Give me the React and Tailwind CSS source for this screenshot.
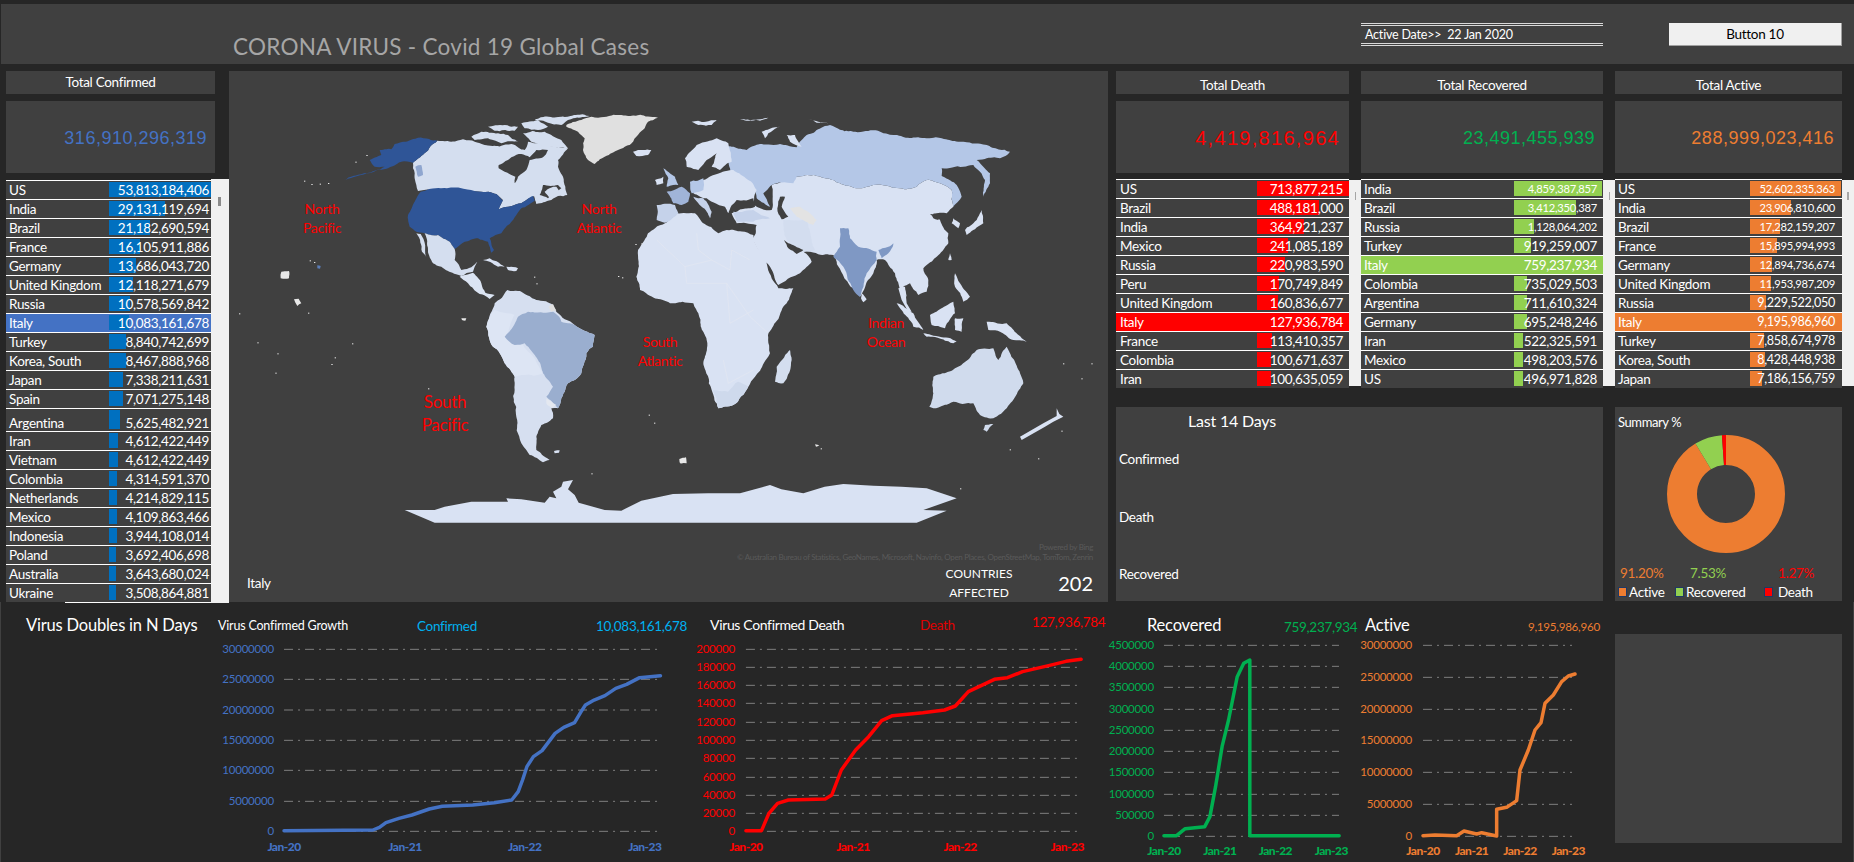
import React from 'react';

const CONFIRMED = [
  ['US', '53,813,184,406', 102], ['India', '29,131,119,694', 56], ['Brazil', '21,182,690,594', 41],
  ['France', '16,105,911,886', 31], ['Germany', '13,686,043,720', 27], ['United Kingdom', '12,118,271,679', 24],
  ['Russia', '10,578,569,842', 21], ['Italy', '10,083,161,678', 20], ['Turkey', '8,840,742,699', 17],
  ['Korea, South', '8,467,888,968', 17], ['Japan', '7,338,211,631', 14], ['Spain', '7,071,275,148', 14],
  ['Argentina', '5,625,482,921', 11, null, true], ['Iran', '4,612,422,449', 9], ['Vietnam', '4,612,422,449', 9],
  ['Colombia', '4,314,591,370', 8], ['Netherlands', '4,214,829,115', 8], ['Mexico', '4,109,863,466', 8],
  ['Indonesia', '3,944,108,014', 8], ['Poland', '3,692,406,698', 7], ['Australia', '3,643,680,024', 7],
  ['Ukraine', '3,508,864,881', 7],
];
const DEATHS = [
  ['US', '713,877,215', 92], ['Brazil', '488,181,000', 62], ['India', '364,921,237', 47], ['Mexico', '241,085,189', 31],
  ['Russia', '220,983,590', 28], ['Peru', '170,749,849', 22], ['United Kingdom', '160,836,677', 21], ['Italy', '127,936,784', 92],
  ['France', '113,410,357', 15], ['Colombia', '100,671,637', 14], ['Iran', '100,635,059', 14],
];
const RECOVERED = [
  ['India', '4,859,387,857', 88, 's'], ['Brazil', '3,412,350,387', 62, 's'], ['Russia', '1,128,064,202', 20, 's'],
  ['Turkey', '919,259,007', 17], ['Italy', '759,237,934', 88], ['Colombia', '735,029,503', 13], ['Argentina', '711,610,324', 13],
  ['Germany', '695,248,246', 13], ['Iran', '522,325,591', 9], ['Mexico', '498,203,576', 9], ['US', '496,971,828', 9],
];
const ACTIVE = [
  ['US', '52,602,335,363', 91, 's'], ['India', '23,906,810,600', 41, 's'], ['Brazil', '17,282,159,207', 30, 's'],
  ['France', '15,895,994,993', 27, 's'], ['Germany', '12,894,736,674', 22, 's'], ['United Kingdom', '11,953,987,209', 21, 's'],
  ['Russia', '9,229,522,050', 16, 'm'], ['Italy', '9,195,986,960', 91, 'm'], ['Turkey', '7,858,674,978', 14, 'm'],
  ['Korea, South', '8,428,448,938', 15, 'm'], ['Japan', '7,186,156,759', 12, 'm'],
];

const numSize = {
  s: 'text-[11.2px] tracking-[-0.25px]',
  m: 'text-[12.6px] tracking-[-0.3px]',
};

const Row = ({ row, barLeft, barClass, hlClass, pad }) => {
  const [name, value, w, size, tall] = row;
  const selected = name === 'Italy';
  return (
    <div className={`relative flex items-center justify-between border-t border-white ${tall ? 'h-[23px] pt-[6px]' : 'h-[19px] pt-[1px]'} ${pad} ${selected ? hlClass : ''}`}>
      <div className={`absolute top-[1px] ${tall ? 'h-[19px]' : 'h-[15px]'} ${barClass}`} style={{ left: barLeft, width: w }} />
      <span className="relative">{name}</span>
      <span className={`relative ${size ? numSize[size] : ''}`}>{value}</span>
    </div>
  );
};

const Table = ({ rows, barLeft, barClass, hlClass, pad, width }) => (
  <div className={`bg-[#404040] text-white text-[13.5px] tracking-[-0.3px] ${width}`}>
    {rows.map((r) => (
      <Row key={r[0]} row={r} barLeft={barLeft} barClass={barClass} hlClass={hlClass} pad={pad} />
    ))}
  </div>
);

const Scroll = ({ lineClass }) => (
  <div className="w-[12px] h-[206px] mt-[1px] bg-[#f0f0f0] flex justify-center pt-[12px]">
    <div className={lineClass} />
  </div>
);

const StatHead = ({ title, value, color, width, extra }) => (
  <div className={width}>
    <div className="h-[23px] bg-[#404040] text-white text-[13.5px] tracking-[-0.3px] text-center pt-[4px]">{title}</div>
    <div className={`mt-[7px] h-[72px] pt-[2px] bg-[#404040] flex items-center justify-end [font-family:'Liberation_Sans',sans-serif] ${color} ${extra}`}>{value}</div>
  </div>
);

const LAND = '#d9e2f3';
const WATER = '#404040';

// small seeded wobble so the traced coastlines don't look like straight cuts
const hash = (a, b) => {
  const s = Math.sin(a * 12.9898 + b * 78.233) * 43758.5453;
  return s - Math.floor(s);
};
const rough = (d) => {
  let pts = d.trim().split(/\s+/).map((p) => p.split(',').map(Number));
  for (let round = 0; round < 4; round++) {
    const next = [];
    pts.forEach((a, i) => {
      const b = pts[(i + 1) % pts.length];
      next.push(a);
      const len = Math.hypot(b[0] - a[0], b[1] - a[1]);
      if (len < 10) return;
      const mx = (a[0] + b[0]) / 2;
      const my = (a[1] + b[1]) / 2;
      const amp = len * 0.16;
      next.push([mx + (hash(mx, my) - 0.5) * amp, my + (hash(my, mx) - 0.5) * amp]);
    });
    pts = next;
  }
  return pts.map((p) => `${p[0].toFixed(1)},${p[1].toFixed(1)}`).join(' ');
};

const Shape = ({ d, fill = LAND }) => <polygon points={rough(d)} fill={fill} />;
// helper to shift coordinates of the eastern half of the map
const e = (pts, dy = 0) => pts.trim().split(/\s+/).map((p) => {
  const [x, y] = p.split(',').map(Number);
  return `${x + 1236},${y + dy}`;
}).join(' ');

const DOTS = [
  [228, 332], [250, 342], [275, 341], [300, 339], [382, 275], [415, 255], [245, 571], [258, 576], [33, 730], [88, 817],
  [148, 850], [310, 882], [320, 862], [142, 908], [600, 955], [372, 820], [240, 728], [1170, 618], [1182, 622], [1222, 522],
  [1240, 520], [925, 640], [918, 620], [1262, 1034], [1278, 1058], [1090, 1210], [1778, 1135], [2196, 1255], [2345, 1138],
  [2430, 1165], [2500, 1082], [2590, 880], [2505, 880], [2560, 925],
];

const WorldMap = () => (
  <svg viewBox="3 3 2637 1593" className="absolute inset-0 w-full h-full">
    {/* Greenland */}
    <Shape fill="#e0e0e0" d="1015,165 1060,150 1090,140 1180,135 1290,143 1260,155 1250,175 1225,200 1205,225 1170,240 1130,260 1100,282 1080,270 1065,240 1070,205 1050,185 1015,170" />
    {/* Canada */}
    <Shape fill="#d4deef" d="628,212 705,208 740,215 770,225 850,222 890,240 900,215 960,225 1020,235 990,270 990,290 1005,320 1012,350 1018,375 990,378 970,390 925,402 918,378 880,400 840,410 812,418 825,390 805,372 760,365 570,363 565,345 560,310 555,278" />
    <Shape fill={WATER} d="812,285 850,262 880,252 905,262 925,240 960,240 945,262 905,270 895,300 870,320 860,340 862,320 830,305 812,295" />
    <Shape fill={WATER} d="945,345 990,345 1000,355 960,385 935,375" />
    <Shape fill="#d4deef" d="950,365 985,350 995,365 965,385" />
    <Shape fill="#d4deef" d="730,200 760,185 810,190 840,195 870,215 820,220 780,205 740,210" />
    <Shape fill="#d4deef" d="780,170 830,165 870,170 860,182 800,182" />
    <Shape fill="#d4deef" d="880,160 930,150 960,170 930,180 890,175" />
    <Shape fill="#d4deef" d="920,148 1000,140 1085,138 1020,150 1000,165 960,158" />
    <Shape fill="#d4deef" d="885,190 950,185 1000,210 1020,235 960,228 910,215" />
    {/* USA */}
    <Shape fill="#2f5597" d="578,365 760,365 805,372 825,392 812,418 840,410 880,400 915,378 920,392 880,415 865,435 845,462 820,490 785,505 798,540 790,548 780,515 750,505 710,515 680,537 665,515 630,495 590,490 565,485 545,470 540,435 560,395" />
    <Shape fill="#2f5597" d="628,212 570,203 500,222 490,238 455,240 460,255 425,270 440,290 470,290 400,315 340,332 420,310 480,295 520,275 555,278" />
    <Shape fill="#5b7db8" d="268,586 278,588 276,596 268,595" />
    <Shape fill="#8fa6cf" d="562,290 580,285 585,315 570,320" />
    <Shape fill="#e8e8e8" d="160,605 183,603 183,625 158,625" />
    <Shape fill="#e8e8e8" d="198,688 212,686 220,700 208,708" />
    {/* Mexico and central america */}
    <Shape fill="#d4deef" d="590,490 630,495 665,515 680,537 680,570 700,600 730,592 748,575 735,605 700,618 640,590 615,580 600,540" />
    <Shape fill="#d4deef" d="565,490 578,492 595,562 582,545" />
    <Shape fill="#dbe4f3" d="695,620 735,608 760,640 772,668 800,675 785,687 755,672 720,640" />
    <Shape fill="#d9e2f3" d="765,570 785,565 830,590 810,590" />
    <Shape fill="#d9e2f3" d="835,590 870,595 865,603 840,600" />
    <Shape fill="#e8e8e8" d="700,745 715,745 712,752 702,750" />
    {/* South America */}
    <Shape fill="#d6dff0" d="800,700 838,660 880,665 925,690 975,705 985,725 1040,765 1100,795 1095,830 1075,850 1060,910 1020,940 1010,965 990,1015 970,1015 975,1045 940,1065 925,1100 925,1140 965,1170 945,1177 905,1155 880,1120 865,1040 860,920 830,880 795,830 775,770" />
    <Shape fill="#dde5f4" d="800,720 860,735 835,800 885,825 945,910 880,915 860,920 830,880 795,830 775,770" />
    <Shape fill="#9aaecf" d="870,740 900,725 975,725 1000,755 1040,765 1100,795 1095,830 1075,850 1060,910 1020,940 1010,965 990,1015 955,980 975,950 945,910 930,870 890,820 860,825 830,800 855,770" />
    <Shape fill="#e4e8f0" d="955,985 985,1005 972,1015 955,1000" />
    <Shape fill="#d9e2f3" d="978,1143 995,1141 993,1148 980,1150" />
    <Shape fill="#e0e0e0" d="962,710 975,702 985,722 970,725" />
    {/* Antarctica */}
    <polygon fill={LAND} points="530,1320 620,1320 650,1310 730,1295 840,1295 835,1285 880,1288 950,1298 965,1280 985,1285 975,1265 1000,1250 1005,1235 1035,1230 1020,1258 1040,1275 1052,1298 1130,1320 1180,1322 1240,1292 1335,1272 1440,1270 1536,1270 1626,1245 1660,1258 1726,1270 1790,1250 1846,1242 1936,1247 2020,1250 2096,1255 2186,1285 2086,1320 2156,1322 2066,1358 620,1358" />
    {/* Africa */}
    <Shape d="1225,620 1230,540 1260,490 1311,460 1346,430 1401,430 1421,455 1471,490 1496,480 1576,495 1581,520 1641,640 1651,655 1696,655 1676,700 1621,790 1626,850 1581,920 1561,950 1516,1005 1471,1015 1451,960 1426,880 1436,810 1411,730 1396,700 1326,700 1236,660" />
    <Shape fill="#ced9ec" d="1471,1015 1455,960 1500,965 1530,935 1561,950 1516,1005" />
    <Shape fill="#d4deef" d={e('450,30 455,60 430,130 405,125 410,80', 810)} />
    {/* Asia */}
    <Shape d={e('395,345 470,320 520,315 600,340 650,355 700,345 780,355 830,350 860,330 900,340 935,360 940,410 920,430 880,430 900,450 925,490 925,520 890,560 860,585 850,595 865,630 860,665 835,675 810,640 790,650 800,680 780,660 765,610 735,570 710,570 700,610 660,680 580,555 510,545 490,545 515,575 480,610 415,645 400,610 340,510 350,465 290,460 275,430 340,405 395,420')} />
    <polygon fill={LAND} points={e('775,655 795,650 800,700 815,725 805,725 785,690')} />
    <Shape fill="#d3ddef" d={e('430,450 500,450 525,540 490,545 440,510')} />
    <Shape fill="#e3e3e3" d={e('450,415 480,410 530,450 520,465 470,440')} />
    <Shape fill={WATER} d={e('420,380 435,380 425,410 445,440 425,448 412,415')} />
    <Shape fill={WATER} d={e('432,510 445,520 490,540 470,552 445,535')} />
    <Shape fill={WATER} d={e('870,432 900,428 895,450 880,445')} />
    <Shape fill="#b4c7e7" d={e('268,290 268,228 320,240 360,222 420,222 470,232 500,195 570,165 640,185 760,195 860,205 960,215 1040,225 1110,245 1080,265 1040,265 1010,270 1050,310 1050,340 1030,380 1035,330 1000,285 970,290 905,295 905,318 950,345 965,380 940,410 935,360 900,340 860,330 830,350 780,355 700,345 650,355 600,340 520,315 470,320 460,340 395,345 370,370 390,410 350,385 340,350 290,330')} />
    <Shape d={e('155,155 230,150 215,165 175,165')} />
    <Shape d={e('300,147 385,143 360,152 320,152')} />
    <Shape d={e('365,185 420,170 385,190 375,205')} />
    <Shape d={e('440,195 465,195 485,230 450,215')} />
    <Shape d={e('505,147 570,160 530,158')} />
    {/* India */}
    <Shape fill="#7f98c4" d={e('600,475 625,475 630,505 655,530 710,545 710,570 680,610 660,680 640,660 610,590 580,560 600,530')} />
    <Shape fill="#7f98c4" d={e('715,540 760,520 745,550 725,565')} />
    <Shape d={e('665,670 680,688 670,697 663,685')} />
    {/* Europe */}
    <Shape d={e('135,265 170,225 230,205 265,220 275,275 240,300 215,290 230,250 200,270 175,300 140,290')} />
    <Shape d="1215,245 1270,240 1260,255 1225,258" />
    <Shape fill="#b4c7e7" d={e('70,295 105,320 115,345 80,350 85,325')} />
    <Shape d={e('45,330 70,320 70,340 50,345')} />
    <Shape d={e('190,330 280,300 350,360 340,395 290,390 265,430 255,410 200,385 160,370')} />
    <Shape fill="#a0b4d8" d={e('80,365 125,350 150,370 145,395 125,405 100,400')} />
    <Shape fill="#c5d2ea" d={e('50,405 105,405 115,430 75,458 50,450')} />
    <Shape fill="#b4c7e7" d={e('150,335 190,325 190,360 155,370')} />
    <Shape fill="#c5d2ea" d={e('160,380 190,385 215,425 210,445 185,410')} />
    <Shape fill="#c5d2ea" d={e('280,425 340,420 390,445 340,455 290,455')} />
    <Shape fill={WATER} d={e('290,395 340,385 345,410 290,418')} />
    {/* East and south-east Asia islands */}
    <Shape d={e('1025,420 1030,460 980,495 975,480 1010,450')} />
    <Shape d={e('940,445 960,460 955,475 935,460')} />
    <Shape d={e('945,610 960,640 990,680 970,695 945,650')} />
    <Shape d={e('930,550 935,570 925,570')} />
    <Shape d={e('870,735 940,695 945,730 915,775 875,765')} />
    <Shape d={e('770,700 820,730 850,780 820,770')} />
    <Shape d={e('850,790 950,815 940,820 860,800')} />
    <Shape d={e('945,745 970,745 965,785 945,780')} />
    <Shape d={e('1040,755 1100,760 1160,815 1120,810 1080,785 1045,780')} />
    {/* Australia and New Zealand */}
    <Shape fill="#d0dbed" d={e('880,110 945,85 1010,30 1060,25 1075,60 1100,20 1140,100 1150,130 1100,205 1060,235 1020,225 1000,190 940,185 880,205 868,200 880,160', 810)} />
    <Shape fill="#d0dbed" d={e('1035,255 1060,252 1040,275 1030,270', 810)} />
    <polygon fill={LAND} points={e('1250,205 1258,222 1270,230 1240,245 1215,260 1145,300 1140,290 1210,250 1250,228', 810)} />
    <Shape fill="#e8e8e8" d={e('118,357 138,352 140,370 120,370', 810)} />
    <Shape fill="#e8e8e8" d={e('525,313 538,316 528,320', 810)} />
    {DOTS.map(([x, y]) => <rect key={`${x}-${y}`} x={x} y={y} width="4" height="3" fill="#e8e8e8" />)}
    {/* African borders */}
    <g fill="none" stroke="#e6e9f0" strokeWidth="1.5">
      <polyline points={e('50,510 135,590 215,570 270,600 275,540 330,570')} />
      <polyline points={e('135,590 140,640 260,640 330,740 385,790')} />
      <polyline points={e('170,490 175,540 215,570')} />
      <polyline points={e('260,640 270,760 340,720')} />
      <polyline points={e('250,60 265,130 340,90', 810)} />
    </g>
  </svg>
);

const MapLabel = ({ x, y, lines, big }) => (
  <div className={`absolute -translate-x-1/2 text-[#ff0000] text-center ${big ? 'text-[17px] leading-[23px]' : 'text-[14px] leading-[19px]'} tracking-[-0.3px]`} style={{ left: x - 229, top: y - 71 }}>
    {lines.map((l) => <div key={l}>{l}</div>)}
  </div>
);

const Chart = ({ left, width, x0, sx, color, yLabelEnd, xLabelY, gridEnd, ticks, xTicks, points }) => {
  const px = (v) => x0 + v / sx;
  const py = (v) => 600 + v / 3;
  return (
    <svg viewBox={`${left} 638 ${width} 224`} className="block overflow-visible" style={{ width, height: 224 }}>
      {ticks.map(([label, y]) => (
        <g key={label}>
          <line x1={px(xTicks[0][1])} x2={gridEnd} y1={py(y)} y2={py(y)} stroke="#7f7f7f" strokeDasharray="9 5 2 5" />
          <text x={yLabelEnd} y={py(y) + 4} textAnchor="end" fill={color} fontSize="11.5" letterSpacing="-0.2">{label}</text>
        </g>
      ))}
      {xTicks.map(([label, x]) => (
        <text key={label} x={px(x)} y={xLabelY} textAnchor="middle" fill={color} fontSize="12" fontWeight="900" letterSpacing="-0.5">{label}</text>
      ))}
      <polyline
        fill="none"
        stroke={color}
        strokeWidth="3.5"
        strokeLinejoin="round"
        strokeLinecap="round"
        points={points.map(([x, y]) => `${px(x)},${py(y)}`).join(' ')}
      />
    </svg>
  );
};

const App = () => (
  <div className="relative w-[1854px] h-[862px] overflow-hidden bg-[#262626] pt-[4px] text-white [font-family:Lato,sans-serif]">
    {/* header */}
    <header className="h-[60px] bg-[#404040] ml-[1px] flex items-start relative">
      <h1 className="ml-[232px] mt-[28px] w-[1128px] text-[#a6a6a6] text-[22.5px] leading-[30px] tracking-[0.27px]">CORONA VIRUS - Covid 19 Global Cases</h1>
      <div className="mt-[19px] w-[242px] h-[23px] border-y-[3px] border-double border-[#d9d9d9] text-[12.5px] tracking-[-0.2px] pl-[4px] leading-[17px]">Active Date&gt;&gt;&nbsp; 22 Jan 2020</div>
      <button className="ml-[66px] mt-[19px] w-[173px] h-[23px] bg-[#f0f0f0] border-b border-r border-[#a0a0a0] text-black text-[13.5px] tracking-[-0.3px]">Button 10</button>
    </header>

    {/* main row */}
    <main className="h-[538px] flex pl-[6px] pt-[7px]">
      <section className="w-[223px]">
        <div className="w-[209px] h-[23px] bg-[#404040] text-[13.5px] tracking-[-0.3px] text-center pt-[1px]">Total Confirmed</div>
        <div className="w-[209px] mt-[7px] h-[72px] pt-[2px] bg-[#404040] flex items-center justify-end pr-[8px] [font-family:'Liberation_Sans',sans-serif] text-[18px] tracking-[0.5px] text-[#4472c4]">316,910,296,319</div>
        <div className="mt-[6px] flex items-start">
          <div className="pt-[1px] w-[205px]">
            <Table rows={CONFIRMED} barLeft={103} barClass="bg-[#0070c0]" hlClass="bg-[#4472c4]" pad="pl-[3px] pr-[2px]" width="w-[205px]" />
            <div className="h-px ml-[59px] bg-white" />
          </div>
          <div className="w-[18px] h-[424px] bg-[#f0f0f0] pt-[18px] pl-[7px]">
            <div className="w-[3px] h-[9px] bg-[#8a8a8a]" />
          </div>
        </div>
      </section>

      <section className="relative w-[879px] h-[531px] bg-[#404040]">
        <WorldMap />
        <MapLabel x={322} y={199} lines={['North', 'Pacific']} />
        <MapLabel x={599} y={199} lines={['North', 'Atlantic']} />
        <MapLabel x={660} y={332} lines={['South', 'Atlantic']} />
        <MapLabel x={886} y={313} lines={['Indian', 'Ocean']} />
        <MapLabel x={445} y={390} lines={['South', 'Pacific']} big />
        <span className="absolute left-[18px] top-[502px] text-[13.5px] tracking-[-0.3px] leading-[20px]">Italy</span>
        <div className="absolute right-[15px] top-[471px] text-right text-[#5a5a5a] text-[8px] tracking-[-0.33px] leading-[10px]">
          <div>Powered by Bing</div>
          <div>© Australian Bureau of Statistics, GeoNames, Microsoft, Navinfo, Open Places, OpenStreetMap, TomTom, Zenrin</div>
        </div>
        <div className="absolute left-[700px] top-[493px] w-[100px] text-center text-[12px] leading-[19px]">
          <div>COUNTRIES</div>
          <div>AFFECTED</div>
        </div>
        <span className="absolute right-[15px] top-[498px] text-[20px] leading-[28px]">202</span>
      </section>

      <section className="ml-[8px] w-[738px]">
        <div className="flex">
          <div className="w-[245px]">
            <StatHead title="Total Death" value="4,419,816,964" color="text-[#ff0000]" width="w-[233px]" extra="pr-[9px] text-[20px] tracking-[1.3px]" />
            <div className="mt-[6px] flex">
              <Table rows={DEATHS} barLeft={141} barClass="bg-[#ff0000]" hlClass="bg-[#ff0000]" pad="pl-[4px] pr-[6px]" width="w-[233px] h-[209px]" />
              <Scroll lineClass="w-px h-[8px] bg-[#a6a6a6]" />
            </div>
          </div>
          <div className="w-[254px]">
            <StatHead title="Total Recovered" value="23,491,455,939" color="text-[#00b050]" width="w-[242px]" extra="pr-[8px] text-[18px] tracking-[0.5px]" />
            <div className="mt-[6px] flex">
              <Table rows={RECOVERED} barLeft={153} barClass="bg-[#92d050]" hlClass="bg-[#92d050]" pad="pl-[3px] pr-[6px]" width="w-[242px] h-[209px]" />
              <Scroll lineClass="w-px h-[8px] bg-[#a6a6a6]" />
            </div>
          </div>
          <div className="w-[239px]">
            <StatHead title="Total Active" value="288,999,023,416" color="text-[#ed7d31]" width="w-[227px]" extra="pr-[8px] text-[18px] tracking-[0.5px]" />
            <div className="mt-[6px] flex">
              <Table rows={ACTIVE} barLeft={135} barClass="bg-[#ed7d31]" hlClass="bg-[#ed7d31]" pad="pl-[3px] pr-[7px]" width="w-[227px] h-[209px]" />
              <Scroll lineClass="w-[2px] h-[8px] bg-[#a6a6a6]" />
            </div>
          </div>
        </div>
        <div className="mt-[19px] flex">
          <div className="w-[487px] h-[194px] bg-[#404040] pt-[4px] pl-[3px] text-[13.5px] tracking-[-0.3px] leading-[20px]">
            <div className="pl-[69px] text-[16px] tracking-[-0.2px]">Last 14 Days</div>
            <div className="mt-[18px]">Confirmed</div>
            <div className="mt-[38px]">Death</div>
            <div className="mt-[37px]">Recovered</div>
          </div>
          <div className="ml-[12px] w-[227px] h-[194px] bg-[#404040] text-[13px] tracking-[-0.3px]">
            <div className="h-[28px] pl-[3px] pt-[6px] leading-[18px] tracking-[-0.4px]">Summary %</div>
            <svg viewBox="0 0 118 118" className="ml-[52px] w-[118px] h-[118px] -rotate-90">
              <circle cx="59" cy="59" r="44" fill="none" stroke="#ed7d31" strokeWidth="30" strokeDasharray="252.1 276.46" />
              <circle cx="59" cy="59" r="44" fill="none" stroke="#92d050" strokeWidth="30" strokeDasharray="20.8 276.46" strokeDashoffset="-252.1" />
              <circle cx="59" cy="59" r="44" fill="none" stroke="#ff0000" strokeWidth="30" strokeDasharray="3.6 276.46" strokeDashoffset="-272.9" />
            </svg>
            <div className="mt-[10px] h-[20px] flex leading-[20px] text-[13.5px]">
              <span className="ml-[5px] w-[70px] text-[#ed7d31]">91.20%</span>
              <span className="w-[88px] text-[#92d050]">7.53%</span>
              <span className="text-[#ff0000]">1.27%</span>
            </div>
            <div className="h-[18px] flex items-center text-[13.5px] leading-[18px]">
              <span className="ml-[3px] w-[9px] h-[10px] bg-[#ed7d31] border border-[#1f3864]" />
              <span className="ml-[2px] w-[46px]">Active</span>
              <span className="w-[9px] h-[10px] bg-[#92d050] border border-[#1f3864]" />
              <span className="ml-[2px] w-[78px]">Recovered</span>
              <span className="w-[9px] h-[10px] bg-[#ff0000] border border-[#1f3864]" />
              <span className="ml-[5px]">Death</span>
            </div>
          </div>
        </div>
      </section>
    </main>

    {/* bottom charts */}
    <div className="flex h-[260px] border-x border-[#404040]">
      <div className="w-[217px] pl-[25px] pt-[12px] text-[16.5px] leading-[22px] tracking-[-0.2px]">Virus Doubles in N Days</div>

      <div className="w-[492px]">
        <div className="h-[36px] pt-[14px] flex leading-[20px]">
          <span className="w-[199px] text-[12.5px] tracking-[-0.2px]">Virus Confirmed Growth</span>
          <span className="w-[179px] text-[13.5px] tracking-[-0.3px] text-[#00b0f0]">Confirmed</span>
          <span className="text-[13.5px] tracking-[-0.3px] text-[#00b0f0]">10,083,161,678</span>
        </div>
        <Chart
          left={218} width={492} x0={0} sx={2.306} color="#4472c4" yLabelEnd={274} xLabelY={851} gridEnd={660}
          ticks={[['30000000', 148], ['25000000', 238], ['20000000', 330], ['15000000', 421], ['10000000', 511], ['5000000', 604], ['0', 694]]}
          xTicks={[['Jan-20', 655], ['Jan-21', 934], ['Jan-22', 1210], ['Jan-23', 1487]]}
          points={[[655, 692], [860, 690], [875, 682], [890, 668], [920, 655], [950, 645], [970, 636], [990, 627], [1020, 619], [1090, 615], [1140, 608], [1180, 600], [1195, 575], [1205, 540], [1215, 500], [1230, 470], [1250, 452], [1280, 400], [1300, 382], [1325, 368], [1340, 335], [1350, 315], [1370, 300], [1395, 287], [1420, 265], [1445, 253], [1475, 233], [1523, 227]]}
        />
      </div>

      <div className="w-[437px]">
        <div className="h-[36px] pt-[13px] flex leading-[20px]">
          <span className="w-[210px] text-[14px] tracking-[-0.35px]">Virus Confirmed Death</span>
          <span className="w-[112px] text-[13.5px] tracking-[-0.3px] text-[#e00000]">Death</span>
          <span className="-mt-[3px] text-[13.5px] tracking-[-0.3px] text-[#ff0000]">127,936,784</span>
        </div>
        <Chart
          left={710} width={437} x0={680} sx={2.306} color="#ff0000" yLabelEnd={735} xLabelY={851} gridEnd={1081}
          ticks={[['200000', 148], ['180000', 202], ['160000', 256], ['140000', 310], ['120000', 367], ['100000', 421], ['80000', 475], ['60000', 532], ['40000', 586], ['20000', 640], ['0', 694]]}
          xTicks={[['Jan-20', 152], ['Jan-21', 399], ['Jan-22', 646], ['Jan-23', 893]]}
          points={[[152, 692], [188, 692], [205, 640], [225, 610], [250, 600], [335, 597], [350, 585], [372, 510], [405, 450], [435, 410], [465, 362], [490, 347], [560, 338], [610, 330], [635, 318], [665, 275], [725, 238], [755, 233], [790, 215], [850, 197], [890, 184], [925, 178]]}
        />
      </div>

      <div className="w-[218px]">
        <div className="h-[36px] pt-[12px] flex leading-[22px]">
          <span className="w-[137px] text-[16.5px] tracking-[-0.2px]">Recovered</span>
          <span className="mt-[2px] text-[13.5px] tracking-[-0.3px] text-[#00b050]">759,237,934</span>
        </div>
        <Chart
          left={1147} width={218} x0={680} sx={2.306} color="#00b050" yLabelEnd={1154} xLabelY={855} gridEnd={1339}
          ticks={[['4500000', 136], ['4000000', 199], ['3500000', 262], ['3000000', 328], ['2500000', 391], ['2000000', 454], ['1500000', 517], ['1000000', 583], ['500000', 646], ['0', 709]]}
          xTicks={[['Jan-20', 1116], ['Jan-21', 1245], ['Jan-22', 1373], ['Jan-23', 1502]]}
          points={[[1116, 707], [1145, 707], [1165, 686], [1210, 680], [1222, 650], [1235, 560], [1250, 440], [1265, 360], [1285, 230], [1300, 190], [1314, 180], [1314, 707], [1520, 707]]}
        />
      </div>

      <div className="w-[250px]">
        <div className="h-[36px] pt-[12px] flex leading-[22px]">
          <span className="w-[163px] text-[16.5px] tracking-[-0.2px]">Active</span>
          <span className="mt-[2px] text-[11.6px] tracking-[-0.25px] text-[#ed7d31]">9,195,986,960</span>
        </div>
        <Chart
          left={1365} width={250} x0={1340} sx={3} color="#ed7d31" yLabelEnd={1412} xLabelY={855} gridEnd={1572}
          ticks={[['30000000', 136], ['25000000', 232], ['20000000', 328], ['15000000', 421], ['10000000', 517], ['5000000', 613], ['0', 709]]}
          xTicks={[['Jan-20', 249], ['Jan-21', 395], ['Jan-22', 540], ['Jan-23', 685]]}
          points={[[249, 707], [285, 705], [350, 707], [372, 693], [410, 702], [425, 698], [470, 708], [470, 628], [500, 622], [530, 602], [540, 510], [565, 450], [585, 390], [603, 368], [615, 310], [640, 285], [665, 245], [685, 228], [705, 222]]}
        />
      </div>

      <div className="mt-[32px] w-[227px] h-[209px] bg-[#404040]" />
    </div>
  </div>
);

export default App;
